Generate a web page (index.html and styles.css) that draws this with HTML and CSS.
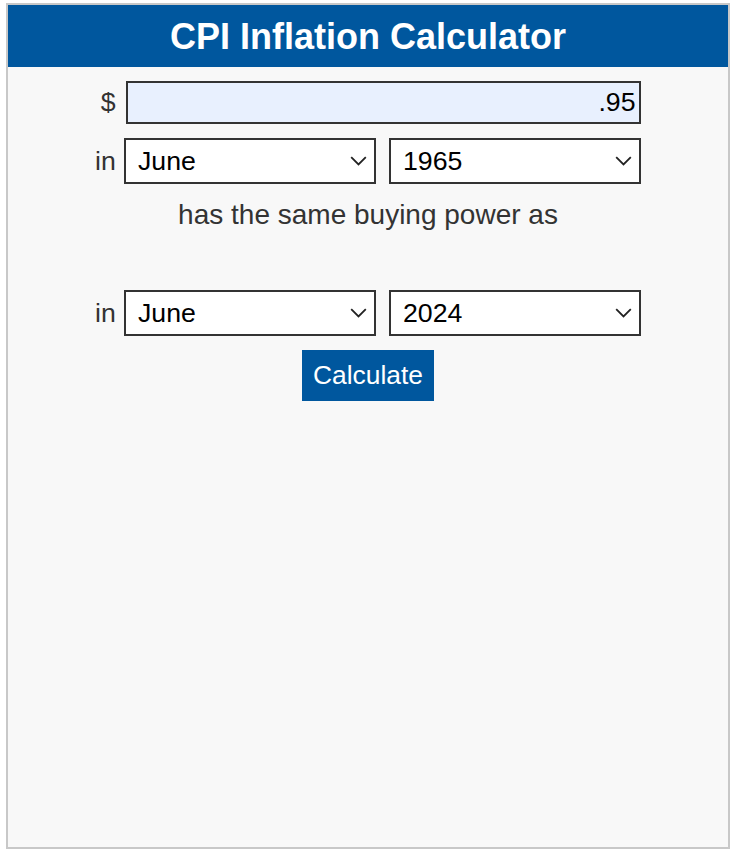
FILE: index.html
```html
<!DOCTYPE html>
<html lang="en">
<head>
    <meta charset="UTF-8">
    <meta name="viewport" content="width=device-width, initial-scale=1.0">
    <title>CPI Inflation Calculator</title>
    <link rel="stylesheet" href="styles.css">
</head>
<body>
    <div class="calc">
        <h1 class="calc-title">CPI Inflation Calculator</h1>
        <form class="calc-form" onsubmit="return false">
            <div class="row">
                <label class="lbl lbl-amount" for="amount">$</label>
                <input type="text" id="amount" class="amount" value=".95">
            </div>
            <div class="row">
                <span class="lbl">in</span>
                <select class="sel">
                    <option>June</option>
                </select>
                <select class="sel">
                    <option>1965</option>
                </select>
            </div>
            <p class="same">has the same buying power as</p>
            <div class="row row-to">
                <span class="lbl">in</span>
                <select class="sel">
                    <option>June</option>
                </select>
                <select class="sel">
                    <option>2024</option>
                </select>
            </div>
            <div class="actions">
                <button type="submit" class="btn">Calculate</button>
            </div>
        </form>
    </div>
</body>
</html>
```

FILE: styles.css
```css
html, body {
    margin: 0;
    background-color: #fff;
}
body {
    padding: 3px 4px 1px 6px;
    font-family: "Liberation Sans", Arial, sans-serif;
}
.calc {
    box-sizing: border-box;
    width: 724px;
    height: 846px;
    border: 2px solid #c8c8c8;
    background-color: #f8f8f8;
}
.calc-title {
    box-sizing: border-box;
    margin: 0;
    height: 62px;
    padding-top: 1px;
    line-height: 61px;
    background-color: #00579e;
    color: #fff;
    font-size: 36px;
    font-weight: bold;
    text-align: center;
}
.calc-form {
    padding-top: 14px;
}
.row {
    display: flex;
    justify-content: center;
    align-items: center;
    margin-bottom: 14px;
}
.lbl {
    width: 20px;
    text-align: right;
    font-size: 26.7px;
    color: #333;
    margin-right: 9px;
}
.lbl-amount {
    margin-right: 10px;
}
.amount {
    box-sizing: border-box;
    width: 515px;
    height: 43px;
    border: 2px solid #333;
    background-color: #e8f0fe;
    font-family: inherit;
    font-size: 26.7px;
    color: #000;
    text-align: right;
    padding: 0 3px;
    margin: 0;
    outline: none;
}
.sel {
    box-sizing: border-box;
    width: 252px;
    height: 46px;
    border: 2px solid #333;
    background-color: #fff;
    font-family: inherit;
    font-size: 26.7px;
    color: #000;
    padding: 0 36px 0 12px;
    margin: 0;
    -webkit-appearance: none;
    appearance: none;
    border-radius: 0;
    background-image: url("data:image/svg+xml,%3Csvg xmlns='http://www.w3.org/2000/svg' width='17' height='10' viewBox='0 0 17 10'%3E%3Cpath d='M1.2 1.2 8.5 8.5l7.3-7.3' fill='none' stroke='%23222' stroke-width='1.8'/%3E%3C/svg%3E");
    background-repeat: no-repeat;
    background-position: right 7px center;
}
.sel + .sel {
    margin-left: 13px;
}
.same {
    margin: 0;
    padding-top: 3px;
    font-size: 28px;
    line-height: 28px;
    color: #333;
    text-align: center;
}
.row-to {
    margin-top: 61px;
}
.actions {
    text-align: center;
}
.btn {
    height: 51px;
    width: 132px;
    padding: 0;
    border: none;
    background-color: #00579e;
    color: #fff;
    font-family: inherit;
    font-size: 26.4px;
    cursor: pointer;
}
```
